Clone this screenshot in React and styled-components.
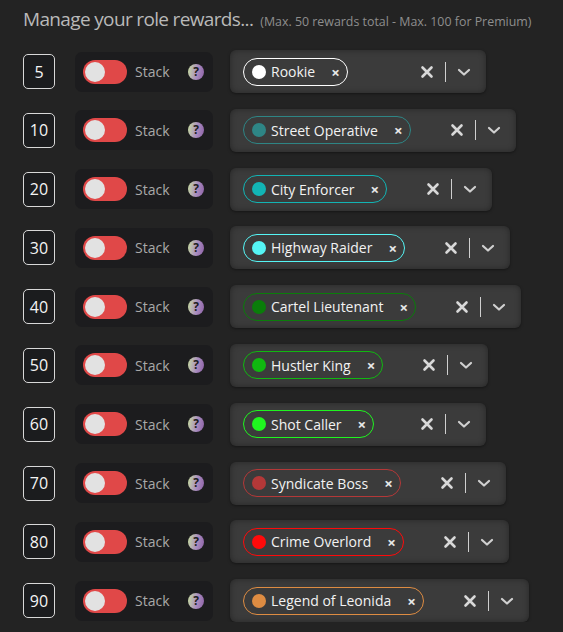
import styled, {createGlobalStyle} from "styled-components";

const GlobalStyle = createGlobalStyle`
  html, body {
    margin: 0;
    background-color: #232323;
  }
  body {
    font-family: "Open Sans", "Noto Sans", sans-serif;
  }
`

const rewards = [
  {level: 5, name: 'Rookie', color: '#ffffff'},
  {level: 10, name: 'Street Operative', color: '#2e8585'},
  {level: 20, name: 'City Enforcer', color: '#12b4b4'},
  {level: 30, name: 'Highway Raider', color: '#55f5f5'},
  {level: 40, name: 'Cartel Lieutenant', color: '#0a7d0a'},
  {level: 50, name: 'Hustler King', color: '#10b810'},
  {level: 60, name: 'Shot Caller', color: '#1ff51f'},
  {level: 70, name: 'Syndicate Boss', color: '#b43838'},
  {level: 80, name: 'Crime Overlord', color: '#ff0a0a'},
  {level: 90, name: 'Legend of Leonida', color: '#de8c42'},
];

const ClearIcon = () => (
  <svg width="20" height="20" viewBox="0 0 20 20">
    <path d="M5.5 5.5 L14.5 14.5 M14.5 5.5 L5.5 14.5" stroke="#d8d8d8" strokeWidth="2.6" strokeLinecap="round"/>
  </svg>
);

const ChevronIcon = () => (
  <svg width="20" height="20" viewBox="0 0 20 20">
    <path d="M5 8 L10 12.5 L15 8" stroke="#d0d0d0" strokeWidth="2.2" fill="none" strokeLinecap="round" strokeLinejoin="round"/>
  </svg>
);

const RewardRow = ({level, name, color}) => (
  <Row>
    <Level>{level}</Level>
    <StackPanel>
      <Toggle><Knob/></Toggle>
      <StackLabel>Stack</StackLabel>
      <Help>?</Help>
    </StackPanel>
    <Select>
      <ValueBox>
        <Chip $color={color}>
          <Dot $color={color}/>
          <ChipText>{name}</ChipText>
          <ChipRemove>×</ChipRemove>
        </Chip>
      </ValueBox>
      <Indicator><ClearIcon/></Indicator>
      <Separator/>
      <Indicator><ChevronIcon/></Indicator>
    </Select>
  </Row>
);

const App = () => {
  return (
    <Page>
      <GlobalStyle/>
      <Header>
        <Title>Manage your role rewards...</Title>
        <Note>(Max. 50 rewards total - Max. 100 for Premium)</Note>
      </Header>
      <List>
        {rewards.map(r => <RewardRow key={r.level} {...r}/>)}
      </List>
    </Page>
  )
};

export default App;

const Page = styled.div`
  padding: 6px 23px 0;
`

const Header = styled.div`
  display: flex;
  align-items: baseline;
  gap: 7px;
  height: 30px;
`

const Title = styled.h1`
  margin: 0;
  font-size: 19px;
  font-weight: 400;
  color: #b9b9b9;
  letter-spacing: -0.65px;
`

const Note = styled.span`
  font-size: 12.4px;
  color: #8e8e8e;
`

const List = styled.div`
  display: flex;
  flex-direction: column;
  gap: 15.8px;
  margin-top: 14px;
`

const Row = styled.div`
  display: flex;
  align-items: center;
  height: 43px;
`

const Level = styled.div`
  box-sizing: border-box;
  width: 32px;
  height: 35px;
  display: flex;
  align-items: center;
  justify-content: center;
  border: 1px solid #d8d8d8;
  border-radius: 5px;
  background-color: #1b1c1e;
  color: #f4f4f4;
  font-size: 16px;
`

const StackPanel = styled.div`
  box-sizing: border-box;
  width: 138px;
  height: 40px;
  margin-left: 20px;
  padding: 0 9px 0 8px;
  display: flex;
  align-items: center;
  border-radius: 7px;
  background-color: #1c1c1e;
`

const Toggle = styled.div`
  box-sizing: border-box;
  width: 44px;
  height: 24px;
  padding: 2px;
  border-radius: 12px;
  background-color: #e04848;
  display: flex;
  align-items: center;
`

const Knob = styled.div`
  width: 20px;
  height: 20px;
  border-radius: 50%;
  background-color: #e2e2e2;
`

const StackLabel = styled.span`
  margin-left: 8px;
  font-size: 14px;
  color: #a9a9a9;
  flex: 1;
`

const Help = styled.span`
  width: 16px;
  height: 16px;
  border-radius: 50%;
  background: linear-gradient(100deg, #c8dea0 0%, #a98dbf 55%, #8f62a8 100%);
  color: #1e1e1e;
  font-size: 12px;
  font-weight: 700;
  line-height: 16px;
  text-align: center;
`

const Select = styled.div`
  box-sizing: border-box;
  min-width: 256px;
  height: 43px;
  margin-left: 17px;
  padding: 0 4px 0 13px;
  display: flex;
  align-items: center;
  border-radius: 6px;
  background-color: #3b3b3b;
  box-shadow: inset 0 0 6px rgba(0, 0, 0, 0.35), 0 1px 3px rgba(0, 0, 0, 0.4);
`

const ValueBox = styled.div`
  flex: 1;
  display: flex;
  align-items: center;
  padding-right: 28px;
`

const Chip = styled.div`
  box-sizing: border-box;
  height: 28px;
  padding: 0 7px 0 8px;
  display: flex;
  align-items: center;
  border: 1.5px solid ${p => p.$color};
  border-radius: 14px;
`

const Dot = styled.span`
  width: 14px;
  height: 14px;
  border-radius: 50%;
  background-color: ${p => p.$color};
`

const ChipText = styled.span`
  margin-left: 5px;
  font-size: 14px;
  color: #f2f2f2;
`

const ChipRemove = styled.span`
  margin-left: 16px;
  font-size: 15px;
  font-weight: 700;
  color: #e8e8e8;
`

const Indicator = styled.div`
  padding: 0 8px;
  display: flex;
  align-items: center;
`

const Separator = styled.div`
  width: 1px;
  height: 20px;
  background-color: #cfcfcf;
`
